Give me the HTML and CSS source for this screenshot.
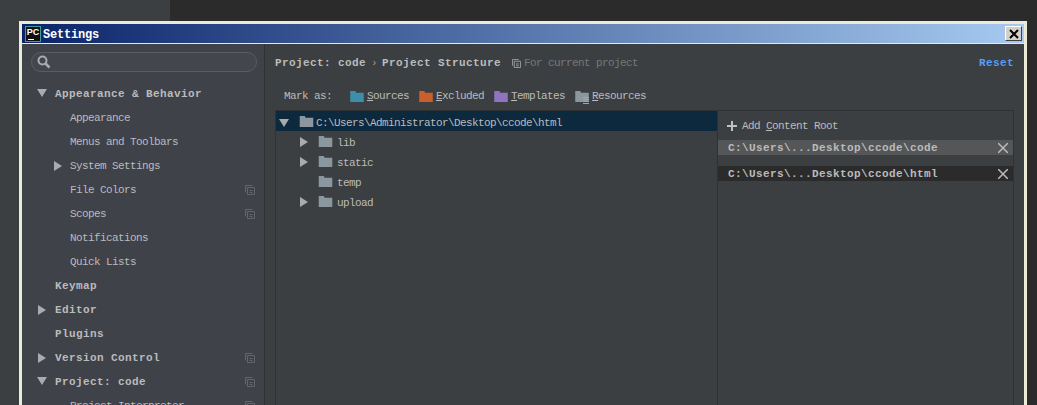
FILE: index.html
```html
<!DOCTYPE html>
<html lang="en">
<head>
  <meta charset="UTF-8" />
  <title>Settings</title>
  <link rel="stylesheet" href="styles.css">
</head>
<body>
  <svg class="defs" width="0" height="0">
    <symbol id="folder" viewBox="0 0 16 13"><path d="M0 0h6l1 2h9v11H0z"/></symbol>
    <symbol id="copy" viewBox="0 0 10 10"><path d="M.5 7.500V.5h7M2.500 9.500v-7h7v7zM4.500 5.500h3M4.500 7.500h3" fill="none" stroke="currentColor"/></symbol>
    <symbol id="close" viewBox="0 0 10 10"><path d="M0 0l10 10M10 0L0 10" stroke="currentColor" stroke-width="1.500"/></symbol>
  </svg>

  <div class="window">
    <div class="titlebar">
      <span class="app-icon">PC</span>
      <span class="title">Settings</span>
      <button class="win-close"><svg width="10" height="10" viewBox="0 0 10 10"><path d="M1 1l8 8M9 1L1 9" stroke="#000" stroke-width="2"/></svg></button>
    </div>

    <div class="content">
      <aside class="sidebar">
        <div class="search">
          <svg width="14" height="14" viewBox="0 0 14 14"><circle cx="5.500" cy="5.500" r="4" fill="none" stroke="#a9abad" stroke-width="2"/><path d="M8.500 8.500l4 4" stroke="#a9abad" stroke-width="2.500"/></svg>
        </div>
        <ul class="nav">
          <li class="top"><i class="arrow down"></i>Appearance &amp; Behavior</li>
          <li class="sub">Appearance</li>
          <li class="sub">Menus and Toolbars</li>
          <li class="sub"><i class="arrow"></i>System Settings</li>
          <li class="sub">File Colors<svg class="scope"><use href="#copy"/></svg></li>
          <li class="sub">Scopes<svg class="scope"><use href="#copy"/></svg></li>
          <li class="sub">Notifications</li>
          <li class="sub">Quick Lists</li>
          <li class="top">Keymap</li>
          <li class="top"><i class="arrow"></i>Editor</li>
          <li class="top">Plugins</li>
          <li class="top"><i class="arrow"></i>Version Control<svg class="scope"><use href="#copy"/></svg></li>
          <li class="top"><i class="arrow down"></i>Project: code<svg class="scope"><use href="#copy"/></svg></li>
          <li class="sub">Project Interpreter<svg class="scope"><use href="#copy"/></svg></li>
        </ul>
      </aside>

      <main class="main">
        <div class="crumbs">
          <b>Project: code</b><span class="sep">›</span><b>Project Structure</b>
          <span class="hint"><svg width="9" height="9"><use href="#copy"/></svg>For current project</span>
          <a class="reset">Reset</a>
        </div>

        <div class="markbar">
          <span class="mark-label">Mark as:</span>
          <span class="mark"><svg class="blue"><use href="#folder"/></svg><span><u>S</u>ources</span></span>
          <span class="mark"><svg class="orange"><use href="#folder"/></svg><span><u>E</u>xcluded</span></span>
          <span class="mark"><svg class="purple"><use href="#folder"/></svg><span><u>T</u>emplates</span></span>
          <span class="mark"><svg class="grey"><use href="#folder"/></svg><i class="lines"></i><span><u>R</u>esources</span></span>
        </div>

        <div class="panes">
          <div class="tree">
            <div class="row root"><i class="arrow down"></i><svg class="grey"><use href="#folder"/></svg><span>C:\Users\Administrator\Desktop\ccode\html</span></div>
            <div class="row"><i class="arrow"></i><svg class="grey"><use href="#folder"/></svg><span>lib</span></div>
            <div class="row"><i class="arrow"></i><svg class="grey"><use href="#folder"/></svg><span>static</span></div>
            <div class="row"><svg class="grey"><use href="#folder"/></svg><span>temp</span></div>
            <div class="row"><i class="arrow"></i><svg class="grey"><use href="#folder"/></svg><span>upload</span></div>
          </div>
          <div class="roots">
            <div class="add-root"><span class="plus"></span><span>Add <u>C</u>ontent Root</span></div>
            <div class="root-item"><b>C:\Users\...Desktop\ccode\code</b><svg width="10" height="10"><use href="#close"/></svg></div>
            <div class="root-item active"><b>C:\Users\...Desktop\ccode\html</b><svg width="10" height="10"><use href="#close"/></svg></div>
          </div>
        </div>
      </main>
    </div>
  </div>
</body>
</html>
```

FILE: styles.css
```css
:root {
  --text: #bbbbbb;
  --panel: #3c3f41;
  --side: #3f4249;
  --line: #2f3234;
}

html, body {
  height: 405px;
  overflow: hidden;
}

body {
  margin: 0;
  background: linear-gradient(to right, #3c3f41 170px, #2b2b2b 170px);
  font-family: "Liberation Mono", monospace;
  font-size: 11px;
  letter-spacing: -0.6px;
  color: var(--text);
}

.defs {
  position: absolute;
}

.window {
  margin: 21px 10px 0 19px;
  height: 400px;
  display: flex;
  flex-direction: column;
  border: 3px solid #ecead9;
  border-bottom: none;
}

.titlebar {
  height: 19px;
  flex: none;
  display: flex;
  align-items: center;
  gap: 2px;
  padding-left: 3px;
  background: linear-gradient(to right, #0a246a, #a6caf0);
  border-bottom: 1px solid #e8e8e8;
}

.app-icon {
  position: relative;
  width: 16px;
  height: 16px;
  box-sizing: border-box;
  background: #111;
  border: 1px solid #3f9b9b;
  color: #fff;
  font: bold 9px/10px "Liberation Sans", sans-serif;
  letter-spacing: 0;
  text-align: center;
}

.app-icon::after {
  content: "";
  position: absolute;
  left: 2px;
  bottom: 1px;
  width: 6px;
  height: 1px;
  background: #fff;
}

.title {
  margin-top: 2px;
  color: #fff;
  font-weight: bold;
  font-size: 12px;
  letter-spacing: -0.2px;
}

.win-close {
  margin: 0 2px 0 auto;
  width: 17px;
  height: 15px;
  padding: 0;
  display: flex;
  align-items: center;
  justify-content: center;
  background: #d4d0c8;
  border: 1px solid;
  border-color: #fff #404040 #404040 #fff;
}

.content {
  flex: 1;
  display: flex;
  min-height: 0;
}

.sidebar {
  width: 242px;
  flex: none;
  background: var(--side);
  border-right: 1px solid var(--line);
  padding-top: 8px;
}

.search {
  margin-left: 9px;
  width: 226px;
  height: 20px;
  display: flex;
  align-items: center;
  padding-left: 5px;
  box-sizing: border-box;
  border: 1px solid #5a5d60;
  border-radius: 10px;
  background: #43464c;
}

.nav {
  list-style: none;
  margin: 10px 0 0;
  padding: 0;
}

.nav li {
  position: relative;
  height: 24px;
  line-height: 24px;
  white-space: nowrap;
}

.nav .top {
  padding-left: 33px;
  font-weight: bold;
  letter-spacing: 0.4px;
}

.nav .sub {
  padding-left: 48px;
}

.nav .arrow {
  position: absolute;
  top: 7px;
  left: 16px;
}

.nav .arrow.down {
  left: 15px;
}

.nav .sub .arrow {
  left: 32px;
}

.scope {
  position: absolute;
  top: 7px;
  right: 9px;
  width: 10px;
  height: 10px;
  color: #62656a;
}

.arrow {
  display: inline-block;
  width: 0;
  height: 0;
  border-style: solid;
  border-width: 5px 0 5px 8px;
  border-color: transparent transparent transparent #a9abad;
}

.arrow.down {
  border-width: 8px 5px 0 5px;
  border-color: #a9abad transparent transparent transparent;
}

.main {
  flex: 1;
  min-width: 0;
  background: var(--panel);
  padding: 13px 10px 0 10px;
}

.crumbs {
  height: 13px;
  line-height: 13px;
  display: flex;
  align-items: center;
  white-space: nowrap;
}

.crumbs b {
  letter-spacing: 0.4px;
}

.sep {
  width: 16px;
  text-align: center;
  color: #999;
}

.hint {
  margin-left: 11px;
  display: flex;
  align-items: center;
  gap: 3px;
  color: #75787a;
}

.hint svg {
  color: #a0a2a4;
}

.reset {
  margin-left: auto;
  color: #589df6;
  font-weight: bold;
  letter-spacing: 0.4px;
}

.markbar {
  margin-top: 18px;
  padding-left: 9px;
  height: 16px;
  display: flex;
  align-items: center;
  white-space: nowrap;
}

.mark-label {
  width: 66px;
}

.mark {
  position: relative;
  display: flex;
  align-items: center;
  margin-right: 10px;
}

.mark svg {
  width: 14px;
  height: 11px;
  margin-right: 3px;
}

.lines {
  position: absolute;
  left: 8px;
  top: 7px;
  width: 6px;
  height: 7px;
  background: repeating-linear-gradient(#e0a030 0 1px, transparent 1px 2px);
}

.blue { fill: #3d8eab; }
.orange { fill: #c9602c; }
.purple { fill: #9174c0; }
.grey { fill: #8a979e; }

.panes {
  margin-top: 6px;
  height: 300px;
  display: flex;
  border-top: 1px solid var(--line);
  border-left: 1px solid var(--line);
  border-right: 1px solid var(--line);
}

.tree {
  width: 441px;
  flex: none;
  border-right: 1px solid var(--line);
}

.row {
  height: 20px;
  box-sizing: border-box;
  padding: 3px 0 0 42px;
  display: flex;
  align-items: center;
  position: relative;
  white-space: nowrap;
}

.row svg {
  width: 15px;
  height: 11px;
  margin: -3px 4px 0 0;
}

.row .arrow {
  position: absolute;
  left: 24px;
  top: 6px;
}

.row.root {
  padding-left: 23px;
  background: #0d293e;
}

.row.root .arrow {
  left: 3px;
  top: 8px;
}

.row.root svg {
  margin-right: 2px;
}

.roots {
  flex: 1;
  min-width: 0;
}

.add-root {
  height: 29px;
  display: flex;
  align-items: center;
  padding-left: 9px;
}

.plus {
  width: 10px;
  height: 10px;
  margin-right: 5px;
  background:
    linear-gradient(#c0c0c0, #c0c0c0) center / 10px 2px no-repeat,
    linear-gradient(#c0c0c0, #c0c0c0) center / 2px 10px no-repeat;
}

.root-item {
  height: 15px;
  margin-bottom: 11px;
  display: flex;
  align-items: center;
  justify-content: space-between;
  padding: 0 5px 0 10px;
  background: #555657;
}

.root-item b {
  letter-spacing: 0.4px;
}

.root-item.active {
  background: #2b2b2b;
}
```
